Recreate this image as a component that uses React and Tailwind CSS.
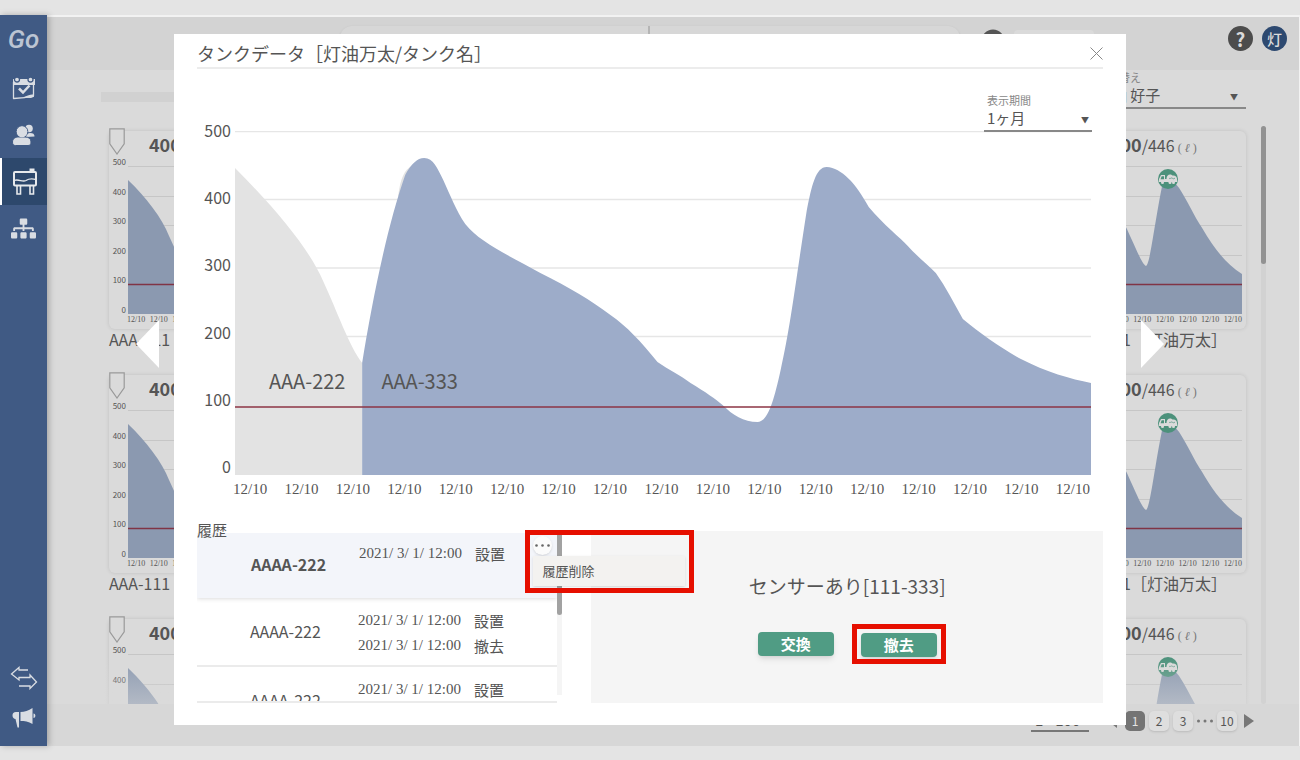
import { FaSitemap, FaUserCircle } from 'react-icons/fa';

const MINI_PATH =
  'M0 14 C18 31 34 52 41 70 C48 85 53 98 57 100 C61 98 65 60 73 20 C75 12 83 12 90 22 C98 34 105 50 113 62 C125 83 138 99 153 108 L153 148 L0 148 Z';

const BLUE_PATH =
  'M127 232 C137 170 152 95 170 44 C176 33 182 27 189 27 C198 27 202 37 208 49 C215 64 221 80 230 93 C245 112 275 125 305 142 C335 157 355 169 375 184 C392 196 405 210 422 231 C433 239 445 244 455 252 C470 261 480 268 487 274 C497 284 508 291 522 291 C532 291 538 271 545 239 C555 195 560 150 571 80 C576 55 580 36 591 36 C606 37 620 52 633 76 C648 94 665 107 672 115 C680 124 692 134 700 142 C710 156 718 172 727 188 C745 203 765 217 785 228 C810 241 835 248 855 252 L855 344 L127 344 Z';

const GREY_PATH = 'M0 37 C45 82 75 120 88 150 C102 180 114 215 127 232 L127 344 L0 344 Z';

const LEVELS = [500, 400, 300, 200, 100, 0];

const HISTORY = [
  { name: 'AAAA-222', active: true, events: ['設置'] },
  { name: 'AAAA-222', events: ['設置', '撤去'] },
  { name: 'AAAA-222', events: ['設置'] }
];

const CalendarIcon = () => (
  <svg width="24" height="24" viewBox="0 0 24 24" fill="none" stroke="#d9dde3" strokeWidth="1.300">
    <path d="M1.500 6v16.500l11-.8 9-2.200V6" strokeLinejoin="round" />
    <path d="M1 3h22v6H1z" fill="#d9dde3" stroke="none" />
    <path d="M9 21.800c4-.5 8-3.500 13-3.500v2.500l-3 1.200z" fill="#d9dde3" stroke="none" />
    <circle cx="5" cy="3.500" r="2.500" fill="#d9dde3" stroke="#405a84" />
    <circle cx="18.500" cy="3.500" r="2.500" fill="#d9dde3" stroke="#405a84" />
    <path d="M7 12.500l4 4 6.500-7" strokeWidth="2.500" />
  </svg>
);

const UsersIcon = () => (
  <svg width="24" height="24" viewBox="0 0 24 24" fill="#d9dde3">
    <circle cx="17" cy="5.500" r="3.800" />
    <path d="M14 14c0-3 2-4 4-4 3 0 4.500 1 4.500 3.500z" />
    <g stroke="#405a84" strokeWidth="1">
      <circle cx="10" cy="8.500" r="5.800" />
      <path d="M.5 19c0-3.500 3-5 6-5h6.500c3.500 0 6 1.500 6 5 0 2.500-1 3.500-3 3.500h-12.500c-2 0-3-1-3-3.500z" />
    </g>
    <circle cx="10" cy="9" r="5.200" />
  </svg>
);

const TankIcon = () => (
  <svg width="26" height="28" viewBox="0 0 26 28" fill="none" stroke="#e6e9ec" strokeWidth="2">
    <rect x="2" y="4" width="22" height="13.500" rx="1" />
    <path d="M17.500 2.500h5" strokeWidth="4" />
    <path d="M2 12.500c5-2 8 2 12 0 3-2 6-2 10-1" strokeWidth="1.300" />
    <path d="M5 17v9h3.500v-9M18 17v9h3.500v-9" strokeWidth="1.600" />
  </svg>
);

const SwapIcon = () => (
  <svg width="28" height="24" viewBox="0 0 28 24" fill="none" stroke="#d9dde3" strokeWidth="1.300">
    <path d="M18 4H9V1.500L1.500 8l7.500 6v-2.500h11V9l6.500 7-6.500 6.500V20H9" />
  </svg>
);

const MegaphoneIcon = () => (
  <svg width="24" height="22" viewBox="0 0 24 22" fill="#d9dde3">
    <path d="M7 5H4C1.500 5 .5 6.500.5 8.500S2 12 3.500 12L5.500 20.500H7z" />
    <path d="M8.500 5c4 0 8-1.500 12-4v16c-4-2.500-8-3-12-3z" />
    <path d="M21.500 6.500c2.500.5 2.500 4 0 4.500z" />
  </svg>
);

const TruckBadge = () => (
  <svg className="absolute left-1/2 top-[3px] -ml-[7px]" width="20" height="20" viewBox="0 0 20 20">
    <circle cx="10" cy="10" r="10" fill="#4c917b" />
    <path d="M1 13V10l2-4h4v4h1.500C8.500 7 10 5.500 12 5.500c1 0 2 .5 2.500 1C17 6 19 7.500 19 10v3z" fill="#dadada" />
    <path d="M3.700 7.300H6v3H2.500z" fill="#4c917b" />
    <path d="M11 9c1 1.500 2-.5 3 0s1.500 1.500 3 0" fill="none" stroke="#4c917b" strokeWidth=".7" />
    <circle cx="4.500" cy="13.500" r="1.500" fill="#dadada" />
    <circle cx="12" cy="13.500" r="1.500" fill="#dadada" />
    <circle cx="15.500" cy="13.500" r="1.500" fill="#dadada" />
  </svg>
);

const NavButton = ({ label, active, children }) => (
  <button
    type="button"
    aria-label={label}
    className={
      active
        ? 'flex h-[47px] w-full items-center justify-center border-l-2 border-white bg-[#2d486c]'
        : 'flex h-[47px] w-full items-center justify-center'
    }
  >
    {children}
  </button>
);

const Sidebar = () => (
  <nav className="z-10 flex w-[47px] shrink-0 flex-col bg-[#405a84] text-[#d9dde3] shadow-[2px_0_6px_rgba(0,0,0,0.25)]">
    <a href="#" className="flex h-[49px] items-center justify-center font-['Roboto',sans-serif] text-[26px] font-medium italic text-[#bcc5d3]">
      Go
    </a>
    <NavButton label="予定"><CalendarIcon /></NavButton>
    <NavButton label="顧客"><UsersIcon /></NavButton>
    <NavButton label="タンク" active><TankIcon /></NavButton>
    <NavButton label="組織"><FaSitemap size={25} /></NavButton>
    <div className="mt-auto pb-2">
      <button type="button" aria-label="切替" className="flex h-10 w-full items-center justify-center"><SwapIcon /></button>
      <button type="button" aria-label="お知らせ" className="flex h-10 w-full items-center justify-center"><MegaphoneIcon /></button>
    </div>
  </nav>
);

const TankCard = () => (
  <div className="h-[244px]">
    <div className="relative h-[198px] rounded-md shadow-[0_0_4px_rgba(0,0,0,0.12)]">
      <svg className="absolute left-0 -top-[3px]" width="16" height="27" viewBox="0 0 16 27">
        <path d="M.8.8h14.400v15L8 26 .8 15.800z" fill="#dadada" stroke="#999" strokeWidth="1.200" />
      </svg>
      <p className="flex h-[35px] items-baseline whitespace-nowrap pl-10 text-[16px]">
        <b className="text-[18px] font-bold">400</b>/446
        <span className="pl-[3px] font-['Liberation_Serif',serif] text-[12px] text-[#777]">( <i>ℓ</i> )</span>
      </p>
      <div className="mr-1 flex gap-[2px]">
        <div className="-mt-[10px] mb-[-2px] flex h-[160px] w-[17px] flex-col justify-between text-right text-[8px] leading-3">
          {LEVELS.map((l) => <span key={l}>{l}</span>)}
        </div>
        <div className="relative h-[148px] flex-1">
          <svg className="h-full w-full" viewBox="0 0 153 148" preserveAspectRatio="none">
            <path d="M0 .5H153M0 30.500H153M0 59.500H153M0 89.500H153" stroke="#c6c6c6" />
            <path d={MINI_PATH} fill="#8b99b0" />
            <path d="M0 118.500H153" stroke="#803445" strokeWidth="1.400" />
          </svg>
          <TruckBadge />
        </div>
      </div>
      <div className="ml-[18px] mr-1 flex justify-between font-['Liberation_Serif',serif] text-[8px] leading-3">
        {Array.from({ length: 7 }, (_, i) => <span key={i}>12/10</span>)}
      </div>
    </div>
    <p className="whitespace-nowrap text-[16px] leading-5">AAA-111［灯油万太］</p>
  </div>
);

const Pager = () => (
  <div className="flex h-[42px] items-center justify-end bg-[#d7d7d7] pr-[45px] pb-2 text-[12px]">
    <select aria-label="表示件数" className="mr-[19px] w-[58px] appearance-none border-b-2 border-[#777] pl-1 text-[15px] leading-5">
      <option>1 - 100</option>
    </select>
    <button type="button" aria-label="前へ" className="mr-2 h-0 w-0 border-y-[7px] border-r-[9px] border-y-transparent border-r-[#777]" />
    <div className="flex items-center gap-1">
      <button type="button" className="size-5 rounded-[5px] bg-[#747474] leading-5 text-[#e4e4e4]">1</button>
      <button type="button" className="size-5 rounded-[5px] bg-[#dedede] leading-5 shadow">2</button>
      <button type="button" className="size-5 rounded-[5px] bg-[#dedede] leading-5 shadow">3</button>
      <svg width="16" height="4" viewBox="0 0 16 4" fill="#777">
        <circle cx="1.500" cy="2" r="1.500" />
        <circle cx="8" cy="2" r="1.500" />
        <circle cx="14.500" cy="2" r="1.500" />
      </svg>
      <button type="button" className="size-5 rounded-[5px] bg-[#dedede] leading-5 shadow">10</button>
    </div>
    <button type="button" aria-label="次へ" className="ml-[7px] h-0 w-0 border-y-[7px] border-l-[10px] border-y-transparent border-l-[#777]" />
  </div>
);

const Dashboard = () => (
  <main className="flex min-w-0 flex-1 flex-col border-r border-t-2 border-[#f2f2f2] bg-[#dadada]">
    <header className="flex h-[53px] shrink-0 items-start justify-end gap-[9px] bg-[#d3d3d3] pr-3 pt-[9px]">
      <div className="mr-3 flex h-8 w-1/2 rounded-xl bg-[#d7d7d7] shadow">
        <span className="w-1/2 border-r-2 border-[#b5b5b5]" />
      </div>
      <FaUserCircle size={24} className="mt-[3px]" color="#555" />
      <span className="mr-[125px] mt-1 h-6 w-20 rounded bg-[#dadada]" />
      <button type="button" aria-label="ヘルプ" className="size-[25px] rounded-full bg-[#4c4c4c] text-[19px] font-bold leading-[25px] text-[#dadada]">?</button>
      <button type="button" className="size-[25px] rounded-full bg-[#2d4970] text-[15px] font-medium leading-[24px] text-[#dadada]">灯</button>
    </header>
    <div className="flex h-[56px] shrink-0 items-start gap-3 pl-[54px] pr-[53px]">
      <div className="mt-[22px] h-[10px] flex-1 bg-[#d1d1d1]" />
      <div className="relative w-[153px]">
        <label htmlFor="sort" className="block pl-1 text-[11px] leading-[14px] text-[#888]">並び替え</label>
        <select id="sort" className="block h-[25px] w-full appearance-none border-b-2 border-[#888] pb-[2px] pl-1 text-[15px] leading-5">
          <option>灯油 好子</option>
        </select>
        <span className="pointer-events-none absolute bottom-1 right-2 text-[8px] leading-4">▼</span>
      </div>
    </div>
    <div className="flex min-h-0 flex-1 gap-[15px] pl-[62px] pr-[33px]">
      <div className="relative -ml-2 -mr-2 min-w-0 flex-1 overflow-hidden px-2 pt-[5px]">
        <div className="grid grid-cols-6 gap-x-4">
          {Array.from({ length: 18 }, (_, i) => <TankCard key={i} />)}
        </div>
        <div className="absolute inset-x-0 bottom-0 h-12 bg-linear-to-b from-[#dadada]/0 to-[#dadada]/50" />
      </div>
      <div className="w-[5px] rounded bg-[#d2d2d2]">
        <div className="h-[138px] rounded bg-[#929292]" />
      </div>
    </div>
    <Pager />
  </main>
);

const TankChart = () => (
  <section>
    <div className="flex">
      <div className="-mt-[11px] -mb-[1px] flex w-[38px] flex-col justify-between pr-1 text-right text-[16px] leading-5">
        {LEVELS.map((l) => <span key={l}>{l}</span>)}
      </div>
      <div className="relative mr-[12px] h-[344px] flex-1">
        <svg className="h-full w-full" viewBox="0 0 855 344" preserveAspectRatio="none">
          <path d="M0 .5H855M0 68.500H855M0 137H855M0 205.500H855" stroke="#e6e6e6" strokeWidth="1.400" />
          <path d={GREY_PATH} fill="#e3e3e3" />
          <path d="M163 65C165 48 169 38 178 34L178 75Z" fill="#e3e3e3" />
          <path d={BLUE_PATH} fill="#9dacc9" />
          <path d="M0 276H855" stroke="#8c3544" strokeWidth="1.400" />
        </svg>
        <div className="absolute inset-x-0 top-[238px] flex gap-9 pl-[34px] text-[20px] leading-6">
          <span>AAA-222</span>
          <span>AAA-333</span>
        </div>
      </div>
    </div>
    <div className="ml-[36px] mr-[13px] flex justify-between pt-1 font-['Liberation_Serif',serif] text-[15px] leading-5">
      {Array.from({ length: 17 }, (_, i) => <span key={i}>12/10</span>)}
    </div>
  </section>
);

const History = () => (
  <section className="relative flex-5">
    <h3 className="relative z-10 -mt-[11px] mb-[-7px] text-[15px] leading-5">履歴</h3>
    <div className="flex">
      <ul className="h-[170px] flex-1 overflow-hidden border-b-2 border-[#ebebeb]">
        {HISTORY.map((item, i) => (
          <li
            key={i}
            className={
              item.active
                ? 'flex h-[65px] items-center bg-[#f3f5fa] pl-[54px] font-bold shadow-[0_0_5px_rgba(0,0,0,0.2)]'
                : 'flex h-[69px] items-center border-b-2 border-[#ebebeb] pl-[53px] pt-[2px]'
            }
          >
            <span className="w-[108px] pb-[3px] text-[16px] leading-5">{item.name}</span>
            <div className="h-[50px] font-normal">
              {item.events.map((e) => (
                <p key={e} className="flex text-[15px] leading-[25px]">
                  <time className="w-[116px] font-['Liberation_Serif',serif]">2021/ 3/ 1/ 12:00</time>
                  {e}
                </p>
              ))}
            </div>
          </li>
        ))}
      </ul>
      <div className="mb-2 w-[5px] bg-[#f5f5f5]">
        <div className="h-[82px] rounded-b bg-[#a2a2a2]" />
      </div>
    </div>

    {/* row menu, outlined in red */}
    <div className="absolute -right-[132px] -top-[1px] h-[63px] w-[169px] border-5 border-[#e60f00]">
      <button type="button" aria-label="メニュー" className="absolute left-[3px] top-[1px] flex size-[19px] items-center justify-center rounded-full bg-[#fbfbfb] shadow">
        <svg width="15" height="3" viewBox="0 0 15 3" fill="#666">
          <circle cx="1.500" cy="1.500" r="1.300" />
          <circle cx="7.500" cy="1.500" r="1.300" />
          <circle cx="13.500" cy="1.500" r="1.300" />
        </svg>
      </button>
      <button type="button" className="absolute left-[3px] top-[21px] h-[30px] w-[152px] bg-[#f3f2f0] pl-[9px] text-left text-[13px] shadow">
        履歴削除
      </button>
    </div>
  </section>
);

const SensorPanel = () => (
  <section className="flex flex-7 flex-col items-center bg-[#f5f5f5] pt-[41px]">
    <p className="text-[19px] leading-7">センサーあり[111-333]</p>
    <div className="mt-8 flex gap-[27px]">
      <button type="button" className="h-6 w-[76px] rounded bg-[#509c84] text-[15px] font-bold leading-6 text-white shadow-md">交換</button>
      <div className="relative">
        <button type="button" className="h-6 w-[76px] rounded bg-[#509c84] text-[15px] font-bold leading-6 text-white shadow-md">撤去</button>
        <span className="pointer-events-none absolute -inset-x-[9px] -top-2 -bottom-[7px] border-5 border-[#e60f00]" />
      </div>
    </div>
  </section>
);

const TankDialog = () => (
  <div role="dialog" aria-labelledby="dialog-title" className="min-w-0 flex-1 bg-white px-[23px] pb-[22px] pt-[7px]">
    <div className="flex h-[28px] items-start justify-between border-b-2 border-[#ececec]">
      <h2 id="dialog-title" className="text-[18px] leading-6">タンクデータ［灯油万太/タンク名］</h2>
      <button type="button" aria-label="閉じる" className="pt-[6px]">
        <svg width="13" height="13" viewBox="0 0 13 13" stroke="#888" strokeWidth="1">
          <path d="M.5.5l12 12M12.500.5l-12 12" />
        </svg>
      </button>
    </div>
    <div className="flex justify-end pr-[11px] pt-6">
      <div className="relative -mb-[1px] w-[108px]">
        <label htmlFor="period" className="block pl-[3px] text-[11px] leading-[14px] text-[#888]">表示期間</label>
        <select id="period" className="relative z-10 block h-[25px] w-full appearance-none border-b-2 border-[#888] pb-[2px] pl-[3px] text-[15px] leading-5">
          <option>1ヶ月</option>
        </select>
        <span className="pointer-events-none absolute bottom-1 right-[3px] text-[8px] leading-4">▼</span>
      </div>
    </div>
    <TankChart />
    <div className="mt-8 flex gap-[29px]">
      <History />
      <SensorPanel />
    </div>
  </div>
);

export default function App() {
  return (
    <div className="relative flex h-screen overflow-hidden bg-[#e4e4e4] pb-[14px] pt-[15px] font-['Noto_Sans_CJK_JP',sans-serif] font-normal text-[#555]">
      <Sidebar />
      <Dashboard />
      <div className="absolute inset-x-0 top-[34px] z-20 flex items-start gap-[15px] px-[136px]">
        <button type="button" aria-label="前のタンク" className="mt-[286px] h-0 w-0 border-y-[24px] border-r-[23px] border-y-transparent border-r-white" />
        <TankDialog />
        <button type="button" aria-label="次のタンク" className="mt-[286px] h-0 w-0 border-y-[24px] border-l-[23px] border-y-transparent border-l-white" />
      </div>
    </div>
  );
}
